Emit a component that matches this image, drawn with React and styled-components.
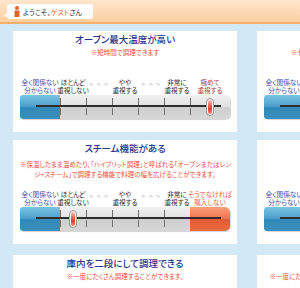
import React from 'react'
import styled, { createGlobalStyle, css } from 'styled-components'

const GlobalStyle = createGlobalStyle`
    body {
        margin: 0;
        background: #d2e9f5;
        font-family: "Noto Sans CJK JP", "Noto Sans", sans-serif;
    }
`
const Page = styled.div`
    width: 300px;
    height: 288px;
    overflow: hidden;
    background: #d2e9f5;
    font-feature-settings: "palt";
`
const Header = styled.header`
    height: 22px;
    border-bottom: 2px solid #f6ae68;
    background: linear-gradient(#fee5cd, #fccfa0);
    display: flex;
    align-items: center;
    padding-left: 7px;
`
const Greeting = styled.div`
    position: relative;
    margin-top: 1px;
    height: 15px;
    width: 86px;
    box-sizing: border-box;
    padding-left: 7px;
    background: #fff;
    border-radius: 3px;
    display: flex;
    align-items: center;
    gap: 3px;
    font-size: 7px;
    color: #333;
    white-space: nowrap;
    // little speech tail on the left
    &::before {
        content: '';
        position: absolute;
        left: -4px;
        bottom: 2px;
        border-style: solid;
        border-width: 3px 5px 1px 0;
        border-color: transparent #fff transparent transparent;
    }
`
const Guest = styled.span`
    color: #f0642d;
`
const Grid = styled.div`
    display: grid;
    grid-template-columns: 224px 224px;
    column-gap: 20px;
    row-gap: 8px;
    padding: 7px 0 0 13px;
    width: max-content;
`
const Card = styled.section`
    background: #fff;
    padding: 2px 7px 13px;
    margin-top: ${p => p.$shift || 0}px;
`
const Title = styled.h3`
    margin: 0;
    font-size: 9.5px;
    line-height: 12px;
    font-weight: 500;
    color: #24348c;
    text-align: center;
    white-space: nowrap;
`
const Note = styled.p`
    margin: ${p => (p.$lines > 1 ? 6 : 3)}px 0 0;
    min-height: 19px;
    font-size: 6.5px;
    line-height: 9.5px;
    color: #f0503c;
    text-align: center;
    white-space: nowrap;
`
const Labels = styled.div`
    display: grid;
    grid-template-columns: 40px 26px 26px 26px 26px 26px 40px;
    margin-top: 11px;
    height: 16px;
`
const Label = styled.div`
    display: flex;
    flex-direction: column;
    align-items: center;
    font-size: 6.6px;
    line-height: 8px;
    white-space: nowrap;
    color: ${p => p.$color || '#2a2a2a'};
`
const Arrows = styled.div`
    text-align: center;
    font-family: "DejaVu Sans", sans-serif;
    font-size: 5.5px;
    line-height: 8px;
    padding-top: 2px;
    letter-spacing: 0.5px;
    color: #bdbdbd;
`
const Track = styled.div`
    position: relative;
    display: flex;
    width: 210px;
    height: 24px;
    margin-top: 1px;
    border-radius: 3px 5px 5px 3px;
    overflow: hidden;
    box-shadow: 1px 1px 1px rgba(0, 0, 0, 0.18);
`
const kinds = {
    blue: 'linear-gradient(#7ac2e3 0%, #4ea2cd 46%, #3189b9 54%, #3a8fbd 100%)',
    gray: 'linear-gradient(#f1f1f1 0%, #e0e0e0 48%, #cecece 52%, #d7d7d7 100%)',
    red: 'linear-gradient(#f8a07a 0%, #ef744c 48%, #e45a32 52%, #ea6c44 100%)',
}
const Segment = styled.div`
    position: relative;
    flex: 0 0 ${p => p.$w}px;
    display: flex;
    align-items: center;
    justify-content: center;
    background: ${p => kinds[p.$kind]};
    ${p => p.$tick && css`
        &::before {
            content: '';
            position: absolute;
            left: 0;
            top: 3px;
            bottom: 4px;
            width: 1px;
            background: linear-gradient(#6e6e6e 0 40%, transparent 40% 60%, #6e6e6e 60%);
        }
    `}
`
const Line = styled.div`
    position: absolute;
    left: 16px;
    right: 9px;
    top: 10px;
    height: 2px;
    background: #2e2e2e;
    z-index: 1;
`
const Thumb = styled.div`
    position: relative;
    z-index: 2;
    width: 8px;
    height: 18px;
    box-sizing: border-box;
    border: 1px solid #9a9a9a;
    border-radius: 4px;
    box-shadow: inset 0 0 0 1px #fff;
    background: linear-gradient(#ffd4cc 0%, #f26a5a 38%, #e33a2c 62%, #f59a8a 100%);
`

const widths = [40, 26, 26, 26, 26, 26, 40]

function Scale({ value, last }) {
    const kindsOf = ['blue', 'gray', 'gray', 'gray', 'gray', 'gray', last === 'must' ? 'red' : 'gray']
    return (
        <>
            <Labels>
                <Label $color="#3a4ea6"><span>全く関係ない</span><span>分からない</span></Label>
                <Label><span>ほとんど</span><span>重視しない</span></Label>
                <Arrows>&lt; &lt; &lt;</Arrows>
                <Label><span>やや</span><span>重視する</span></Label>
                <Arrows>&gt; &gt; &gt;</Arrows>
                <Label><span>非常に</span><span>重視する</span></Label>
                {last === 'must'
                    ? <Label $color="#e8603a"><span>そうでなければ</span><span>購入しない</span></Label>
                    : <Label $color="#a2413f"><span>極めて</span><span>重視する</span></Label>}
            </Labels>
            <Track>
                <Line />
                {widths.map((w, i) => (
                    <Segment key={i} $w={w} $kind={kindsOf[i]} $tick={kindsOf[i] === 'gray'}>
                        {value === i && <Thumb />}
                    </Segment>
                ))}
            </Track>
        </>
    )
}

const PersonIcon = () => (
    <svg width="6" height="11" viewBox="0 0 6 11">
        <circle cx="3" cy="2" r="2" fill="#e8622a" />
        <rect x="0.5" y="4.5" width="5" height="6.5" rx="0.5" fill="#e8622a" />
    </svg>
)

export default function App() {
    return (
        <Page>
            <GlobalStyle />
            <Header>
                <Greeting>
                    <PersonIcon />
                    <span>ようこそ、<Guest>ゲスト</Guest>さん</span>
                </Greeting>
            </Header>
            <Grid>
                <Card>
                    <Title>オーブン最大温度が高い</Title>
                    <Note>※短時間で調理できます</Note>
                    <Scale value={6} />
                </Card>
                <Card>
                    <Title>自動メニューが多い</Title>
                    <Note>※センサーが食品の状態を見分けて自動で調理をします</Note>
                    <Scale value={3} />
                </Card>
                <Card>
                    <Title>スチーム機能がある</Title>
                    <Note $lines={2}>
                        ※保温したまま温めたり、「ハイブリット調理」と呼ばれる「オーブンまたはレン<br />
                        ジ+スチーム」で調理する機能で料理の幅を広げることができます。
                    </Note>
                    <Scale value={1} last="must" />
                </Card>
                <Card>
                    <Title>ノンフライ調理ができる</Title>
                    <Note $lines={2}>※油を使わずに揚げ物ができます</Note>
                    <Scale value={5} />
                </Card>
                <Card $shift={3}>
                    <Title>庫内を二段にして調理できる</Title>
                    <Note>※一度にたくさん調理することができます。</Note>
                    <Scale value={3} />
                </Card>
                <Card $shift={3}>
                    <Title>庫内が広くて大きい</Title>
                    <Note>※一度にたくさんの量や複数のおかずを同時に調理することができます。</Note>
                    <Scale value={2} />
                </Card>
            </Grid>
        </Page>
    )
}
